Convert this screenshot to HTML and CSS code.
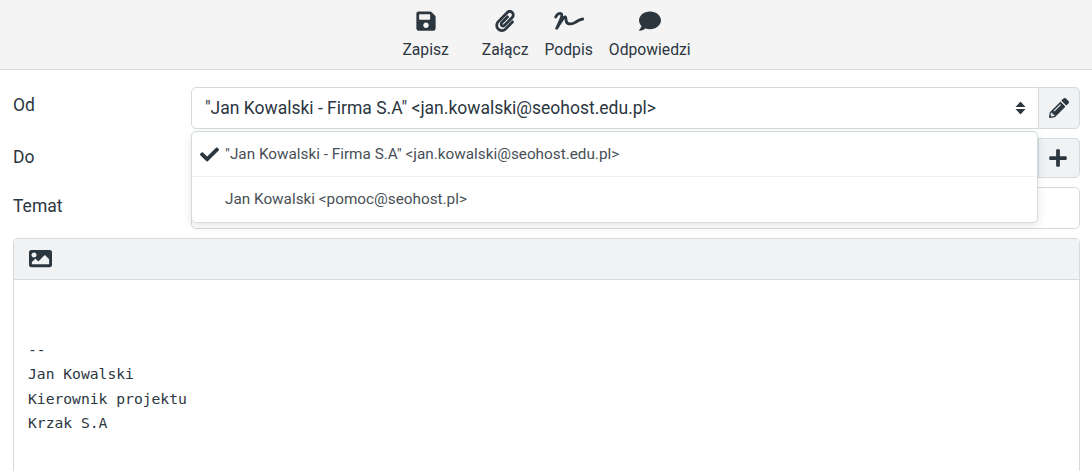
FILE: index.html
```html
<!DOCTYPE html>
<html lang="pl">
<head>
<meta charset="utf-8">
<title>Napisz</title>
<link rel="stylesheet" href="styles.css">
</head>
<body>
<header class="toolbar">
  <a class="tool tool-save"><svg class="tool-icon" viewBox="0 0 448 512"><path d="M433.941 129.941l-83.882-83.882A48 48 0 0 0 316.118 32H48C21.49 32 0 53.49 0 80v352c0 26.51 21.49 48 48 48h352c26.51 0 48-21.49 48-48V163.882a48 48 0 0 0-14.059-33.941zM224 416c-35.346 0-64-28.654-64-64 0-35.346 28.654-64 64-64s64 28.654 64 64c0 35.346-28.654 64-64 64zm96-304.52V212c0 6.627-5.373 12-12 12H76c-6.627 0-12-5.373-12-12V108c0-6.627 5.373-12 12-12h228.52c3.183 0 6.235 1.264 8.485 3.515l3.48 3.48A11.996 11.996 0 0 1 320 111.48z"/></svg><span>Zapisz</span></a>
  <a class="tool"><svg class="tool-icon" viewBox="0 0 448 512"><path d="M43.246 466.142c-58.43-60.289-57.341-157.511 1.386-217.581L254.392 34c44.316-45.332 116.351-45.336 160.671 0 43.89 44.894 43.943 117.329 0 162.276L232.214 383.128c-29.855 30.537-78.633 30.111-107.982-.998-28.275-29.97-27.368-77.473 1.452-106.953l143.743-146.835c6.182-6.314 16.312-6.422 22.626-.241l22.861 22.379c6.315 6.182 6.422 16.312.241 22.626L171.427 319.927c-4.932 5.045-5.236 13.428-.648 18.292 4.372 4.634 11.245 4.711 15.688.165l182.849-186.851c19.613-20.062 19.613-52.725-.011-72.798-19.189-19.627-49.957-19.637-69.154 0L90.39 293.295c-34.763 35.56-35.299 93.12-1.191 128.313 34.01 35.093 88.985 35.137 123.058.286l172.06-175.999c6.177-6.319 16.307-6.433 22.626-.256l22.877 22.364c6.319 6.177 6.434 16.307.256 22.626l-172.06 175.998c-59.576 60.938-155.943 60.216-214.77-.485z"/></svg><span>Załącz</span></a>
  <a class="tool"><svg class="tool-icon tool-icon-wide" viewBox="0 0 30 20"><path class="sign" d="M1.7 6C3 3 6 1.5 7.5 3C9 5 5 12 2.7 17.3C6 12 9 7 10.5 6C12.5 5 11.5 9 12.5 11C14 14 19 13 21 11.5C24 9.5 26 8.5 28.7 8"/></svg><span>Podpis</span></a>
  <a class="tool"><svg class="tool-icon" viewBox="0 0 512 512"><path d="M256 32C114.6 32 0 125.1 0 240c0 49.6 21.4 95 57 130.7C44.5 421.1 2.7 466 2.2 466.5c-2.2 2.3-2.8 5.7-1.5 8.7S4.8 480 8 480c66.3 0 116-31.8 140.6-51.4 32.7 12.3 69 19.4 107.4 19.4 141.4 0 256-93.1 256-208S397.4 32 256 32z"/></svg><span>Odpowiedzi</span></a>
</header>

<main class="compose">
  <div class="row row-from">
    <label class="label">Od</label>
    <div class="group">
      <div class="select">
        <span class="select-value">"Jan Kowalski - Firma S.A" &lt;jan.kowalski@seohost.edu.pl&gt;</span>
        <svg class="select-arrows" viewBox="0 0 11 14"><path d="M5.5 0.5l5 5.5h-10zM5.5 13.500L.5 8h10z"/></svg>
      </div>
      <button class="addon addon-joined"><svg class="addon-icon" viewBox="0 0 512 512"><path d="M497.9 142.1l-46.1 46.1c-4.7 4.7-12.3 4.7-17 0l-111-111c-4.7-4.7-4.7-12.3 0-17l46.1-46.1c18.7-18.7 49.1-18.7 67.9 0l60.1 60.1c18.8 18.7 18.8 49.1 0 67.9zM284.2 99.8L21.6 362.4.4 483.9c-2.9 16.4 11.4 30.6 27.8 27.8l121.5-21.3 262.6-262.6c4.7-4.7 4.7-12.3 0-17l-111-111c-4.8-4.7-12.4-4.7-17.1 0zM124.1 339.9c-5.5-5.5-5.5-14.3 0-19.8l154-154c5.5-5.5 14.3-5.5 19.8 0s5.5 14.3 0 19.8l-154 154c-5.500 5.5-14.3 5.5-19.8 0zM88 424h48v36.3l-64.5 11.3-31.1-31.1L51.7 376H88v48z"/></svg></button>
      <ul class="menu">
        <li class="menu-item"><svg class="check" viewBox="0 0 512 512"><path d="M173.898 439.404l-166.4-166.4c-9.997-9.997-9.997-26.206 0-36.204l36.203-36.204c9.997-9.998 26.207-9.998 36.204 0L192 312.69 432.095 72.596c9.997-9.997 26.207-9.997 36.204 0l36.203 36.204c9.997 9.997 9.997 26.206 0 36.204l-294.4 294.401c-9.998 9.997-26.207 9.997-36.204-.001z"/></svg>"Jan Kowalski - Firma S.A" &lt;jan.kowalski@seohost.edu.pl&gt;</li>
        <li class="menu-item">Jan Kowalski &lt;pomoc@seohost.pl&gt;</li>
      </ul>
    </div>
  </div>
  <div class="row row-to">
    <label class="label">Do</label>
    <div class="group">
      <div class="input input-to"></div>
      <button class="addon addon-joined addon-short"><svg class="addon-icon addon-plus" viewBox="0 0 448 512"><path d="M416 208H272V64c0-17.67-14.33-32-32-32h-32c-17.67 0-32 14.33-32 32v144H32c-17.67 0-32 14.33-32 32v32c0 17.67 14.33 32 32 32h144v144c0 17.67 14.33 32 32 32h32c17.67 0 32-14.33 32-32V304h144c17.67 0 32-14.33 32-32v-32c0-17.67-14.33-32-32-32z"/></svg></button>
    </div>
  </div>
  <div class="row row-subject">
    <label class="label">Temat</label>
    <div class="group"><div class="input input-full"></div></div>
  </div>
  <section class="editor">
    <div class="editor-bar"><svg class="image-icon" viewBox="0 0 512 512"><path d="M464 448H48c-26.51 0-48-21.49-48-48V112c0-26.51 21.49-48 48-48h416c26.51 0 48 21.49 48 48v288c0 26.51-21.49 48-48 48zM112 120c-30.928 0-56 25.072-56 56s25.072 56 56 56 56-25.072 56-56-25.072-56-56-56zM64 384h384V272l-87.515-87.515c-4.686-4.686-12.284-4.686-16.971 0L208 320l-55.515-55.515c-4.686-4.686-12.284-4.686-16.971 0L64 336v48z"/></svg></div>
    <pre class="editor-body">

--
Jan Kowalski
Kierownik projektu
Krzak S.A</pre>
  </section>
</main>
</body>
</html>
```
FILE: styles.css
```css
* { box-sizing: border-box; }
html, body { margin: 0; height: 100%; overflow: hidden; }
body {
  background: #fff;
  color: #2c363f;
  font-family: Roboto, "Liberation Sans", sans-serif;
  font-size: 17.5px;
}
svg { fill: currentColor; display: block; }

.toolbar {
  height: 70px;
  background: #f4f4f4;
  border-bottom: 1px solid #d8d8d8;
  display: flex;
  justify-content: center;
  padding-left: 1px;
}
.tool {
  display: flex;
  flex-direction: column;
  align-items: center;
  padding: 10px 8px 0;
  font-size: 15.7px;
  line-height: 20px;
}
.tool-save { margin-right: 17px; }
.tool-icon { width: 22px; height: 22px; margin-bottom: 8px; }
.tool-icon-wide { width: 30px; height: 20px; margin: 1px 0 9px; }
.sign { fill: none; stroke: currentColor; stroke-width: 2.8; stroke-linecap: round; stroke-linejoin: round; }

.compose { padding: 17px 12px 0 13px; }
.row { display: flex; }
.label { width: 178px; flex: none; line-height: 24px; }
.row-from { height: 51px; }
.row-from .label { padding-top: 6px; }
.row-to { height: 49px; }
.row-to .label { padding-top: 7px; }
.row-subject { height: 51px; }
.row-subject .label { padding-top: 7px; }
.group { flex: 1; display: flex; position: relative; align-items: flex-start; }

.select, .input {
  flex: 1;
  border: 1px solid #d4dbde;
  background: #fff;
}
.select {
  height: 42px;
  border-radius: 5px 0 0 5px;
  display: flex;
  align-items: center;
  justify-content: space-between;
  padding: 0 12px 0 13px;
}
.select-arrows { width: 11px; height: 14px; }
.input-to { height: 40px; border-radius: 5px 0 0 5px; }
.input-full { height: 42px; border-radius: 5px; }

.addon {
  width: 42px;
  height: 42px;
  padding: 0;
  background: #f1f2f4;
  border: 1px solid #d4dbde;
  border-radius: 0 5px 5px 0;
  color: inherit;
  display: flex;
  align-items: center;
  justify-content: center;
}
.addon-joined { margin-left: -1px; }
.addon-short { height: 40px; }
.addon-icon { width: 20px; height: 20px; }
.addon-plus { margin-right: 2px; }

.menu {
  position: absolute;
  top: 44px;
  left: 0;
  width: 847px;
  height: 92px;
  margin: 0;
  padding: 0;
  list-style: none;
  background: #fff;
  border: 1px solid #d4dbde;
  border-radius: 5px;
  box-shadow: 0 3px 10px rgba(0, 0, 0, .1);
  font-size: 15.3px;
  color: #484f56;
  z-index: 2;
}
.menu-item {
  height: 44px;
  display: flex;
  align-items: center;
  padding-left: 33px;
  position: relative;
}
.menu-item + .menu-item { height: 45px; border-top: 1px solid #f0f1f2; }
.check {
  position: absolute;
  left: 8px;
  top: 13px;
  width: 19px;
  height: 19px;
  color: #2c363f;
}

.editor {
  border: 1px solid #d4dbde;
  border-bottom: 0;
  border-radius: 5px 5px 0 0;
  height: 233px;
}
.editor-bar {
  height: 41px;
  background: #f1f2f4;
  border-bottom: 1px solid #d4dbde;
  border-radius: 5px 5px 0 0;
  padding: 8px 15px;
}
.image-icon { width: 23px; height: 23px; }
.editor-body {
  margin: 0;
  padding: 33px 14px 0;
  font-family: "DejaVu Sans Mono", monospace;
  font-size: 14.67px;
  line-height: 24.5px;
}
```
